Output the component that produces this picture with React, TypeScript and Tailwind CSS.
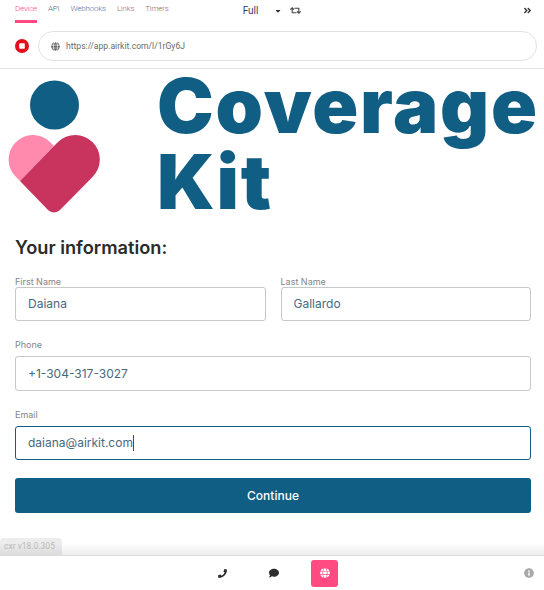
import { FaAngleDoubleRight, FaCaretDown, FaComment, FaGlobe, FaInfoCircle, FaPhoneAlt, FaRetweet } from "react-icons/fa"

const tabs = [
  { label: "Device", color: "text-[#ff4b82]", active: true },
  { label: "API", color: "text-[#5b6478]" },
  { label: "Webhooks", color: "text-[#5f6b9c]" },
  { label: "Links", color: "text-[#b5655f]" },
  { label: "Timers", color: "text-[#8f6a5c]" },
]

function Field({
  label,
  value,
  focused,
  spaced,
  tall,
}: {
  label: string
  value: string
  focused?: boolean
  spaced?: boolean
  tall?: boolean
}) {
  return (
    <div className="flex flex-col">
      <label className={`h-[11px] text-[9px] leading-[11px] text-[#85858c] ${spaced ? "mb-[6px]" : ""}`}>{label}</label>
      <div
        className={`flex items-center rounded-[3px] border bg-white px-[12px] text-[12px] text-[#48687e] ${
          tall ? "h-[35px]" : "h-[34px]"
        } ${focused ? "border-[#105e84]" : "border-[#c8c8c8]"}`}
      >
        {value}
        {focused && <span className="h-[16px] w-px bg-[#105e84]" />}
      </div>
    </div>
  )
}

function Logo() {
  return (
    <div className="flex h-[150px] pl-[6px]">
      <svg width="95" height="145" viewBox="6 74 95 145" className="mt-[5px] shrink-0">
        <circle cx="54.5" cy="105" r="24.5" fill="#105e84" />
        <path d="M20 181 L16 177 A24 24 0 0 1 50 142 L54 146 Z" fill="#ff8aae" />
        <path
          d="M54 146 L58 142 A24 24 0 0 1 92.5 177 L60 210 A8.5 8.5 0 0 1 48 210 L20 181 Z"
          fill="#c9345f"
        />
      </svg>
      <div className="ml-[56px] mt-[-2px] font-['Inter',sans-serif] text-[76px] leading-[76px] font-black tracking-[1.8px] text-[#105e84]">
        <div>Coverage</div>
        <div>Kit</div>
      </div>
    </div>
  )
}

export default function App() {
  return (
    <div className="relative flex h-[590px] w-[544px] flex-col overflow-hidden bg-white font-['Inter',sans-serif]">
      <div className="flex h-[23px] items-start pl-[15px] font-['Roboto',sans-serif] text-[8px]">
        <div className="flex gap-[11px] pt-[4px] tracking-[-0.2px]">
          {tabs.map((tab) => (
            <div key={tab.label} className="flex flex-col">
              <span className={`h-[16px] leading-[10px] font-light ${tab.color}`}>{tab.label}</span>
              {tab.active && <span className="h-[3px] bg-[#ff4b82]" />}
            </div>
          ))}
        </div>
        <span className="ml-[74px] pt-[5px] text-[10px] leading-[11px] text-[#3a3a5c]">Full</span>
        <FaCaretDown className="ml-[16px] mt-[7px] text-[8px] text-[#333]" />
        <FaRetweet className="ml-[8px] mt-[5px] text-[11px] text-[#444]" />
        <FaAngleDoubleRight className="ml-auto mr-[12px] mt-[6px] text-[9px] text-[#333]" />
      </div>

      <div className="flex h-[46px] items-start gap-[9px] border-b border-[#e4e4e4] pl-[15px] pr-[7px] pt-[8px]">
        <svg width="14" height="14" viewBox="0 0 14 14" className="mt-[8px] shrink-0">
          <circle cx="7" cy="7" r="7" fill="#e3101a" />
          <rect x="4.2" y="4.2" width="5.6" height="5.6" rx="0.8" fill="#fff" />
        </svg>
        <div className="flex h-[30px] flex-1 items-center gap-[6px] rounded-full border border-[#e2e2e2] pl-[12px] font-['Roboto',sans-serif] text-[8.6px] text-[#6b6b6b]">
          <FaGlobe className="text-[9px] text-[#666]" />
          <span>https://app.airkit.com/l/1rGy6J</span>
        </div>
      </div>

      <Logo />

      <div className="flex flex-col pl-[15px] pr-[13px]">
        <h1 className="mt-[16px] h-[24px] text-[18.2px] leading-[24px] font-semibold text-[#2b2b2b]">Your information:</h1>
        <div className="mt-[17px] grid grid-cols-2 gap-x-[15px]">
          <Field label="First Name" value="Daiana" />
          <Field label="Last Name" value="Gallardo" />
        </div>
        <div className="mt-[18px]">
          <Field label="Phone" value="+1-304-317-3027" spaced tall />
        </div>
        <div className="mt-[18px]">
          <Field label="Email" value="daiana@airkit.com" spaced focused />
        </div>
        <button className="mt-[18px] h-[35px] rounded-[3px] bg-[#105e84] text-[12px] font-medium text-white">Continue</button>
      </div>

      <div className="absolute bottom-[35px] left-0 h-[17px] w-[62px] rounded-t-[4px] bg-[#ececec] pl-[4px] font-['Roboto',sans-serif] text-[8.5px] leading-[17px] text-[#bdbdbd]">
        cxr v18.0.305
      </div>

      <div className="absolute bottom-[35px] left-0 h-[12px] w-full bg-gradient-to-b from-transparent to-[#00000012]" />

      <div className="absolute bottom-0 left-0 flex h-[35px] w-full items-center border-t border-[#dcdcdc] bg-white">
        <FaPhoneAlt className="ml-[218px] -scale-x-100 text-[9px] text-[#2d2d2d]" />
        <FaComment className="ml-[42px] text-[10px] text-[#2d2d2d]" />
        <div className="ml-[32px] flex h-[27px] w-[27px] items-center justify-center rounded-[3px] bg-[#ff4b82]">
          <FaGlobe className="text-[10px] text-white" />
        </div>
        <FaInfoCircle className="ml-auto mr-[10px] text-[10px] text-[#a8a8a8]" />
      </div>
    </div>
  )
}
